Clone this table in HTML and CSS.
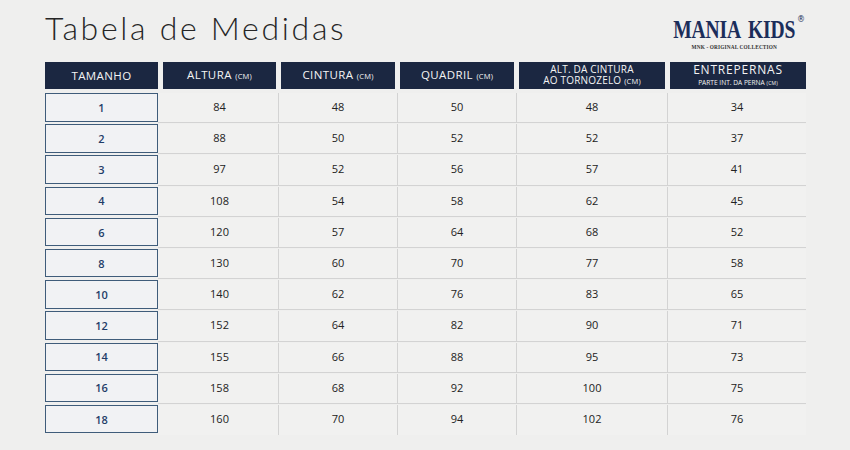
FILE: index.html
```html
<!DOCTYPE html>
<html lang="pt">
<head>
<meta charset="utf-8">
<title>Tabela de Medidas</title>
<link rel="stylesheet" href="styles.css">
</head>
<body>
<div class="page">
  <div class="topbar">
    <h1 class="title">Tabela de Medidas</h1>
    <div class="logo">
      <div class="logo-name"><span class="logo-word">MANIA KIDS</span><span class="reg">®</span></div>
      <div class="logo-sub">MNK - ORIGINAL COLLECTION</div>
    </div>
  </div>

  <div class="table">
    <div class="th"><span>TAMANHO</span></div>
    <div class="th"><span>ALTURA <small>(CM)</small></span></div>
    <div class="th"><span>CINTURA <small>(CM)</small></span></div>
    <div class="th"><span>QUADRIL <small>(CM)</small></span></div>
    <div class="th two"><span>ALT. DA CINTURA<br>AO TORNOZELO <small>(CM)</small></span></div>
    <div class="th two"><span><span class="big">ENTREPERNAS</span><br><span class="sub">PARTE INT. DA PERNA <small>(CM)</small></span></span></div>
  </div>

  <div class="table body">
    <div class="size">1</div><div class="td first">84</div><div class="td">48</div><div class="td">50</div><div class="td">48</div><div class="td last">34</div>
    <div class="size">2</div><div class="td first">88</div><div class="td">50</div><div class="td">52</div><div class="td">52</div><div class="td last">37</div>
    <div class="size">3</div><div class="td first">97</div><div class="td">52</div><div class="td">56</div><div class="td">57</div><div class="td last">41</div>
    <div class="size">4</div><div class="td first">108</div><div class="td">54</div><div class="td">58</div><div class="td">62</div><div class="td last">45</div>
    <div class="size">6</div><div class="td first">120</div><div class="td">57</div><div class="td">64</div><div class="td">68</div><div class="td last">52</div>
    <div class="size">8</div><div class="td first">130</div><div class="td">60</div><div class="td">70</div><div class="td">77</div><div class="td last">58</div>
    <div class="size">10</div><div class="td first">140</div><div class="td">62</div><div class="td">76</div><div class="td">83</div><div class="td last">65</div>
    <div class="size">12</div><div class="td first">152</div><div class="td">64</div><div class="td">82</div><div class="td">90</div><div class="td last">71</div>
    <div class="size">14</div><div class="td first">155</div><div class="td">66</div><div class="td">88</div><div class="td">95</div><div class="td last">73</div>
    <div class="size">16</div><div class="td first">158</div><div class="td">68</div><div class="td">92</div><div class="td">100</div><div class="td last">75</div>
    <div class="size">18</div><div class="td first end">160</div><div class="td end">70</div><div class="td end">94</div><div class="td end">102</div><div class="td last end">76</div>
  </div>
</div>
</body>
</html>
```

FILE: styles.css
```css
* { box-sizing: border-box; }

html, body {
  margin: 0;
  padding: 0;
  width: 850px;
  height: 450px;
  overflow: hidden;
}

body {
  background: #efefee;
  font-family: "Open Sans", "Liberation Sans", sans-serif;
  color: #333;
}

.page {
  padding: 8px 45px 0 45px;
}

.topbar {
  display: flex;
  justify-content: space-between;
  align-items: flex-start;
  height: 54px;
}

.title {
  margin: 0;
  font-family: Lato, "Open Sans", sans-serif;
  font-weight: 300;
  font-size: 32px;
  letter-spacing: 2.7px;
  color: #262626;
  line-height: 40px;
}

.logo {
  display: flex;
  flex-direction: column;
  align-items: center;
  margin-top: 11px;
  color: #1b2d5a;
}

.logo-name {
  display: flex;
  align-items: flex-start;
  height: 22px;
}

.logo-word {
  font-family: "Liberation Serif", "Times New Roman", serif;
  font-weight: 700;
  font-size: 24.5px;
  line-height: 22px;
  display: inline-block;
  transform: scaleX(0.8);
  margin: 0 -14px;
  word-spacing: 4px;
  letter-spacing: -0.2px;
}

.reg {
  font-family: "DejaVu Sans", sans-serif;
  font-size: 8px;
  line-height: 8px;
  margin-left: 1px;
  margin-top: -3px;
}

.logo-sub {
  font-family: "Liberation Serif", serif;
  font-weight: 700;
  font-size: 5.3px;
  letter-spacing: 0.15px;
  margin-top: 3px;
  margin-right: 8px;
  color: #333;
}

.table {
  display: grid;
  grid-template-columns: 113px 113px 114px 114px 146px 136px;
  column-gap: 5px;
}

.th {
  background: #1b2741;
  color: #f4f4f4;
  height: 27px;
  display: flex;
  align-items: center;
  justify-content: center;
  text-align: center;
  font-size: 11.5px;
  font-weight: 500;
  letter-spacing: 0.4px;
  line-height: 12px;
}

.th small {
  font-size: 7.5px;
  letter-spacing: 0.2px;
}

.th.two {
  font-size: 10px;
  line-height: 11px;
  letter-spacing: 0.2px;
}

.th .big {
  font-size: 12px;
  line-height: 12px;
  letter-spacing: 0.8px;
}

.th .sub {
  font-size: 6.6px;
  line-height: 8px;
  letter-spacing: 0;
}

.th .sub small {
  font-size: 5px;
}

.body {
  margin-top: 4px;
  grid-auto-rows: 31.2px;
}

.size {
  height: 28.5px;
  border: 1.5px solid #3f5c7a;
  background: #f1f2f4;
  color: #1f3d68;
  font-size: 11px;
  font-weight: 600;
  display: flex;
  align-items: center;
  justify-content: center;
}

.td {
  margin-left: -2px;
  margin-right: -3px;
  margin-bottom: 1px;
  border-right: 1px solid #d3d3d3;
  border-bottom: 1px solid #d3d3d3;
  background: #f1f1f0;
  font-size: 11px;
  color: #222;
  display: flex;
  align-items: center;
  justify-content: center;
  padding-bottom: 2px;
}

.td.first {
  margin-left: -5px;
  padding-left: 3px;
}

.td.last {
  margin-right: 0;
  border-right: none;
}

.td.end {
  border-bottom: none;
}
```
